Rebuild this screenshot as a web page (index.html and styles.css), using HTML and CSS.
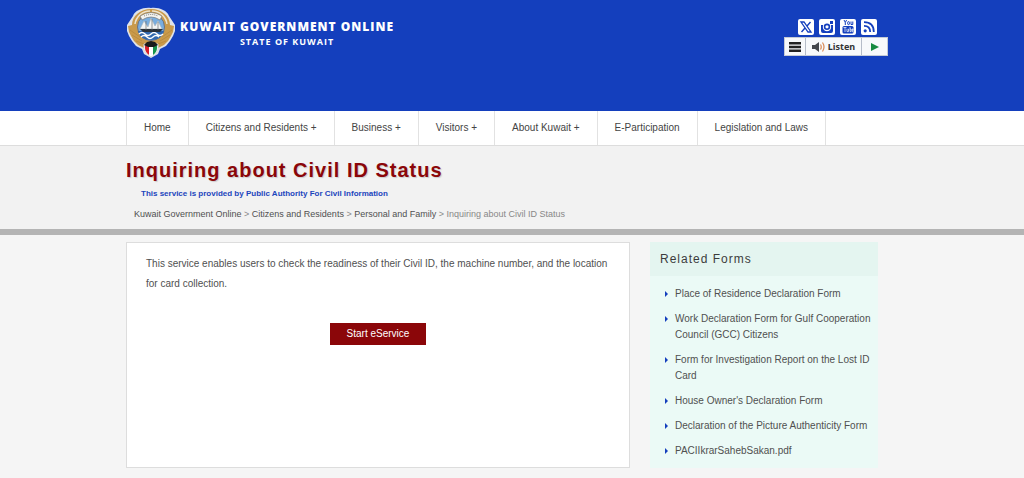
FILE: index.html
```html
<!DOCTYPE html>
<html lang="en">
<head>
  <meta charset="UTF-8">
  <meta name="viewport" content="width=device-width, initial-scale=1.0">
  <title>Inquiring about Civil ID Status</title>
  <link rel="stylesheet" href="styles.css">
</head>
<body>
  <header class="site-header">
    <div class="container header-inner">
      <a class="brand" href="#">
        <svg class="emblem" viewBox="0 0 50 52" aria-hidden="true">
          <path d="M25 1C18 0 9 3 7 9L3 15 1 18 1 24 3 29 6 34 10 39 16 42 18 47 25 51 32 47 34 42 40 39 44 34 47 29 49 24 49 18 47 15 43 9C41 3 32 0 25 1Z" fill="#dfe3ea"/>
          <path d="M25 2C14 2 6 9 6 18L2 19 3 25 5 29 8 34 12 38 18 41 20 37 30 37 32 41 38 38 42 34 45 29 47 25 48 19 44 18C44 9 36 2 25 2Z" fill="#c99a4b"/>
          <path d="M9 17C10 10 16 4 24 4M41 17C40 10 34 4 26 4" fill="none" stroke="#eee3cc" stroke-width="1.5"/>
          <circle cx="25" cy="20" r="13.5" fill="#78addf" stroke="#6b7180" stroke-width="1"/>
          <path d="M14 9Q25 2 36 9L34 13Q25 7 16 13Z" fill="#f4f4f0" stroke="#777" stroke-width=".7"/>
          <path d="M18 9Q25 6 32 9" fill="none" stroke="#777" stroke-width="1" stroke-dasharray="1 1"/>
          <path d="M12 24H38Q36 33 25 33Q14 33 12 24Z" fill="#3268ad"/>
          <path d="M13 27Q16 24 19 27T25 27T31 27T37 27M15 30Q18 27 21 30T27 30T33 30" fill="none" stroke="#fff" stroke-width="1.4"/>
          <path d="M14 22L18 14 22 20 25 11 29 19 32 14 36 22Z" fill="#f2f4f5" stroke="#aab1b7" stroke-width=".6"/>
          <path d="M14 22H37L34 25H17Z" fill="#29313a"/>
          <path d="M20 14V23M26 12V23M32 15V23" stroke="#6a6d70" stroke-width=".7"/>
          <path d="M4 23L14 30M6 28L16 34M10 34L18 37M46 23L36 30M44 28L34 34M40 34L32 37" stroke="#b5853a" stroke-width=".7"/>
          <path d="M18 37V43Q20 48 25 50Q30 48 32 43V37Z" fill="#fff" stroke="#d5dae0" stroke-width="1"/>
          <path d="M19 38L23 40V48Q19 45 19 41Z" fill="#d5202c"/>
          <path d="M31 38L27 40V48Q31 45 31 41Z" fill="#16924b"/>
          <path d="M18 38L21 35 25 34 29 35 32 38 28 40H22Z" fill="#191b1c"/>
        </svg>
        <span class="brand-text">
          <span class="brand-name">KUWAIT GOVERNMENT ONLINE</span>
          <span class="brand-state">STATE OF KUWAIT</span>
        </span>
      </a>

      <div class="tools">
        <div class="social">
          <a href="#" aria-label="X">
            <svg viewBox="0 0 16 16">
              <rect width="16" height="16" rx="2" fill="#fff"/>
              <path d="M3 3H6L13 13H10Z" fill="#fff" stroke="#143fbd" stroke-width="1.3"/>
              <path d="M12.5 3L9 7M7 9L3.5 13" stroke="#143fbd" stroke-width="1.4"/>
            </svg>
          </a>
          <a href="#" aria-label="Instagram">
            <svg viewBox="0 0 16 16">
              <rect width="16" height="16" rx="2" fill="#fff"/>
              <path d="M2 6H4.3A4.2 4.2 0 1 0 11.7 6H14V12Q14 14 12 14H4Q2 14 2 12Z" fill="#143fbd"/>
              <circle cx="8" cy="7.8" r="3.6" fill="#fff"/>
              <circle cx="8" cy="7.8" r="2.4" fill="none" stroke="#143fbd" stroke-width="1.6"/>
              <rect x="11" y="2" width="3" height="3" fill="#143fbd"/>
            </svg>
          </a>
          <a href="#" aria-label="YouTube">
            <svg viewBox="0 0 16 16">
              <rect width="16" height="16" rx="2" fill="#fff"/>
              <path d="M4 1L5.3 3.4 6.6 1M5.3 3.4V6M11 2.5V5.5H12.8V2.5" fill="none" stroke="#143fbd"/>
              <rect x="7.7" y="2.6" width="1.7" height="3" rx=".8" fill="none" stroke="#143fbd"/>
              <rect x="2.5" y="7" width="11" height="7.5" rx="1.5" fill="#143fbd"/>
              <path d="M3.5 8.5H6.5M5 8.5V13M7 9.8V12.6H8.5V9.8M10 8V12.6H11V10H10M13 11.2H12V10H13V11.2M12 11V12.7H13" fill="none" stroke="#fff" stroke-width=".7"/>
            </svg>
          </a>
          <a href="#" aria-label="RSS">
            <svg viewBox="0 0 16 16">
              <rect width="16" height="16" rx="2" fill="#fff"/>
              <circle cx="4.2" cy="11.8" r="1.6" fill="#143fbd"/>
              <path d="M3 6.8Q9.2 6.8 9.2 13M3 3.2Q12.8 3.2 12.8 13" fill="none" stroke="#143fbd" stroke-width="1.8"/>
            </svg>
          </a>
        </div>
        <div class="listen-bar">
          <button class="listen-menu" type="button" aria-label="Reader menu">
            <svg width="12" height="10" viewBox="0 0 12 10">
              <path d="M0 1.3H12M0 5H12M0 8.7H12" stroke="#222" stroke-width="2.5"/>
            </svg>
          </button>
          <button class="listen-main" type="button">
            <svg width="13" height="12" viewBox="0 0 13 12" aria-hidden="true">
              <path d="M0 4H3L7 1V11L3 8H0Z" fill="#44474d"/>
              <path d="M8.5 3.5Q10 6 8.5 8.5M10.5 1.5Q13.5 6 10.5 10.5" fill="none" stroke="#d98a55" stroke-width="1.2"/>
            </svg>
            Listen
          </button>
          <button class="listen-play" type="button" aria-label="Play">
            <svg width="8" height="8" viewBox="0 0 8 8"><path d="M0 0L8 4 0 8Z" fill="#168a40"/></svg>
          </button>
        </div>
      </div>
    </div>
  </header>

  <nav class="main-nav">
    <ul class="container nav-list">
      <li><a href="#">Home</a></li>
      <li><a href="#">Citizens and Residents +</a></li>
      <li><a href="#">Business +</a></li>
      <li><a href="#">Visitors +</a></li>
      <li><a href="#">About Kuwait +</a></li>
      <li><a href="#">E-Participation</a></li>
      <li><a href="#">Legislation and Laws</a></li>
    </ul>
  </nav>

  <section class="page-title">
    <div class="container">
      <h1>Inquiring about Civil ID Status</h1>
      <p class="provider">This service is provided by Public Authority For Civil Information</p>
      <p class="breadcrumb">
        <a href="#">Kuwait Government Online</a> &gt;
        <a href="#">Citizens and Residents</a> &gt;
        <a href="#">Personal and Family</a> &gt;
        <span>Inquiring about Civil ID Status</span>
      </p>
    </div>
  </section>

  <main class="container content">
    <section class="service">
      <p>This service enables users to check the readiness of their Civil ID, the machine number, and the location for card collection.</p>
      <button class="start-button" type="button">Start eService</button>
    </section>

    <aside class="related">
      <h2>Related Forms</h2>
      <ul>
        <li><a href="#">Place of Residence Declaration Form</a></li>
        <li><a href="#">Work Declaration Form for Gulf Cooperation Council (GCC) Citizens</a></li>
        <li><a href="#">Form for Investigation Report on the Lost ID Card</a></li>
        <li><a href="#">House Owner's Declaration Form</a></li>
        <li><a href="#">Declaration of the Picture Authenticity Form</a></li>
        <li><a href="#">PACIIkrarSahebSakan.pdf</a></li>
      </ul>
    </aside>
  </main>
</body>
</html>
```
FILE: styles.css
```css
* {
  box-sizing: border-box;
}

body {
  margin: 0;
  background-color: #f5f5f5;
  color: #505050;
  font-family: "Liberation Sans", Arial, sans-serif;
  font-size: 10px;
}

a {
  color: inherit;
  text-decoration: none;
}

a:hover {
  text-decoration: underline;
}

.container {
  max-width: 772px;
  margin: 0 auto;
}

/* Header */
.site-header {
  background-color: #143fbd;
  min-height: 111px;
}

.header-inner {
  display: flex;
  justify-content: space-between;
  align-items: flex-start;
  padding: 7px 10px 0 0;
}

.brand {
  display: flex;
  gap: 4px;
  color: #fff;
  font-family: "Open Sans", sans-serif;
  font-weight: bold;
}

.emblem {
  width: 50px;
  height: 52px;
}

.brand-text {
  display: flex;
  flex-direction: column;
  align-items: center;
  padding-top: 11px;
}

.brand-name {
  font-size: 12px;
  font-weight: 800;
  line-height: 18px;
  letter-spacing: 1px;
}

.brand-state {
  font-size: 9px;
  line-height: 12px;
  letter-spacing: 1px;
}

.tools {
  padding-top: 12px;
}

.social {
  display: flex;
  justify-content: flex-end;
  gap: 5px;
  padding-right: 11px;
}

.social svg {
  display: block;
  width: 16px;
  height: 16px;
}

.listen-bar {
  display: flex;
  width: 104px;
  height: 19px;
  margin-top: 2px;
  border: 1px solid #c4cbd6;
  background-color: #f7f9fb;
}

.listen-bar button {
  display: flex;
  align-items: center;
  justify-content: center;
  gap: 3px;
  padding: 0;
  border: 0;
  background: none;
  color: #333;
  font-family: "Noto Sans", sans-serif;
  font-size: 9px;
  font-weight: bold;
  cursor: pointer;
}

.listen-bar .listen-menu {
  width: 21px;
  border-right: 1px solid #b5bcc8;
}

.listen-bar .listen-main {
  flex: 1;
}

.listen-bar .listen-play {
  width: 26px;
  border-left: 1px solid #b5bcc8;
}

/* Navigation */
.main-nav {
  background-color: #fff;
  border-bottom: 1px solid #ddd;
}

.nav-list {
  display: flex;
  padding: 0;
  list-style: none;
}

.nav-list li {
  border-right: 1px solid #e2e2e2;
}

.nav-list li:first-child {
  border-left: 1px solid #e2e2e2;
}

.nav-list a {
  display: block;
  padding: 0 17px;
  color: #444;
  font-size: 10px;
  line-height: 34px;
}

/* Title block */
.page-title {
  padding-bottom: 7px;
  border-bottom: 6px solid #b4b4b4;
  background-color: #f2f2f2;
}

h1 {
  margin: 0;
  padding-top: 9px;
  color: #8b0609;
  font-size: 20px;
  line-height: 30px;
  letter-spacing: 1px;
  text-shadow: 1px 1px 1px #ccc;
}

.provider {
  margin: 0;
  padding: 1px 15px 0;
  color: #1c45bd;
  font-size: 8px;
  font-weight: bold;
  line-height: 15px;
}

.breadcrumb {
  margin: 0;
  padding: 6px 8px 0;
  color: #888;
  font-size: 9px;
  line-height: 15px;
}

.breadcrumb a {
  color: #505050;
}

/* Content */
.content {
  display: grid;
  grid-template-columns: 504px 1fr;
  gap: 20px;
  padding: 7px 20px 8px 0;
}

.service {
  padding: 11px 19px;
  border: 1px solid #ddd;
  background-color: #fff;
  text-align: center;
}

.service p {
  margin: 0 0 29px;
  line-height: 20px;
  text-align: left;
}

.start-button {
  padding: 0 17px;
  border: 0;
  background-color: #8b0609;
  color: #fff;
  font-family: inherit;
  font-size: 10px;
  line-height: 22px;
  cursor: pointer;
}

.related {
  background-color: #ebfaf6;
}

.related h2 {
  margin: 0;
  padding: 0 10px;
  background-color: #e4f5f0;
  color: #3c3c3c;
  font-size: 12px;
  font-weight: normal;
  line-height: 34px;
  letter-spacing: 1px;
}

.related ul {
  margin: 0;
  padding: 10px 4px 0 15px;
  list-style: none;
}

.related li {
  display: flex;
  gap: 7px;
  margin-bottom: 9px;
  line-height: 16px;
}

.related li::before {
  content: "";
  flex: none;
  height: 0;
  margin-top: 5px;
  border-top: 3px solid transparent;
  border-bottom: 3px solid transparent;
  border-left: 3px solid #143fbd;
}
```
